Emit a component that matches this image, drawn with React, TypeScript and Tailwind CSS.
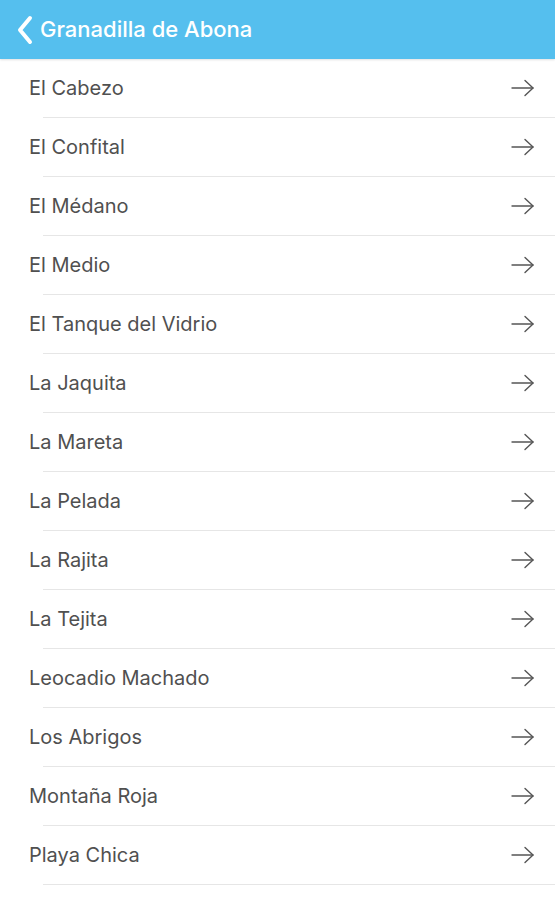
import React from 'react';

const places = [
  'El Cabezo',
  'El Confital',
  'El Médano',
  'El Medio',
  'El Tanque del Vidrio',
  'La Jaquita',
  'La Mareta',
  'La Pelada',
  'La Rajita',
  'La Tejita',
  'Leocadio Machado',
  'Los Abrigos',
  'Montaña Roja',
  'Playa Chica',
];

const Arrow = () => (
  <svg width="24" height="18" viewBox="0 0 24 18" fill="none" stroke="#555" strokeWidth="1.4" strokeLinecap="round" strokeLinejoin="round">
    <path d="M1 9h21" />
    <path d="M14 1.5l8 7.5-8 7.5" />
  </svg>
);

export default function App() {
  return (
    <div className="w-[555px] h-[900px] overflow-hidden bg-white" style={{ fontFamily: 'Inter, Roboto, sans-serif' }}>
      <header className="h-[59px] bg-[#55bfee] flex items-center pl-[16px] shadow-[0_1px_2px_rgba(0,0,0,0.12)] relative z-10">
        <svg width="18" height="30" viewBox="0 0 18 30" fill="none" stroke="white" strokeWidth="4" strokeLinecap="round" strokeLinejoin="round">
          <path d="M14 3L4 15l10 12" />
        </svg>
        <h1 className="ml-[6px] text-white text-[22px] font-medium">Granadilla de Abona</h1>
      </header>
      <ul>
        {places.map((p) => (
          <li key={p} className="h-[59px] flex flex-col">
            <div className="flex-1 flex items-center justify-between pl-[29px] pr-[20px]">
              <span className="text-[20px] text-[#505050]">{p}</span>
              <Arrow />
            </div>
            <div className="ml-[43px] h-px bg-[#e6e6e6]" />
          </li>
        ))}
      </ul>
    </div>
  );
}
